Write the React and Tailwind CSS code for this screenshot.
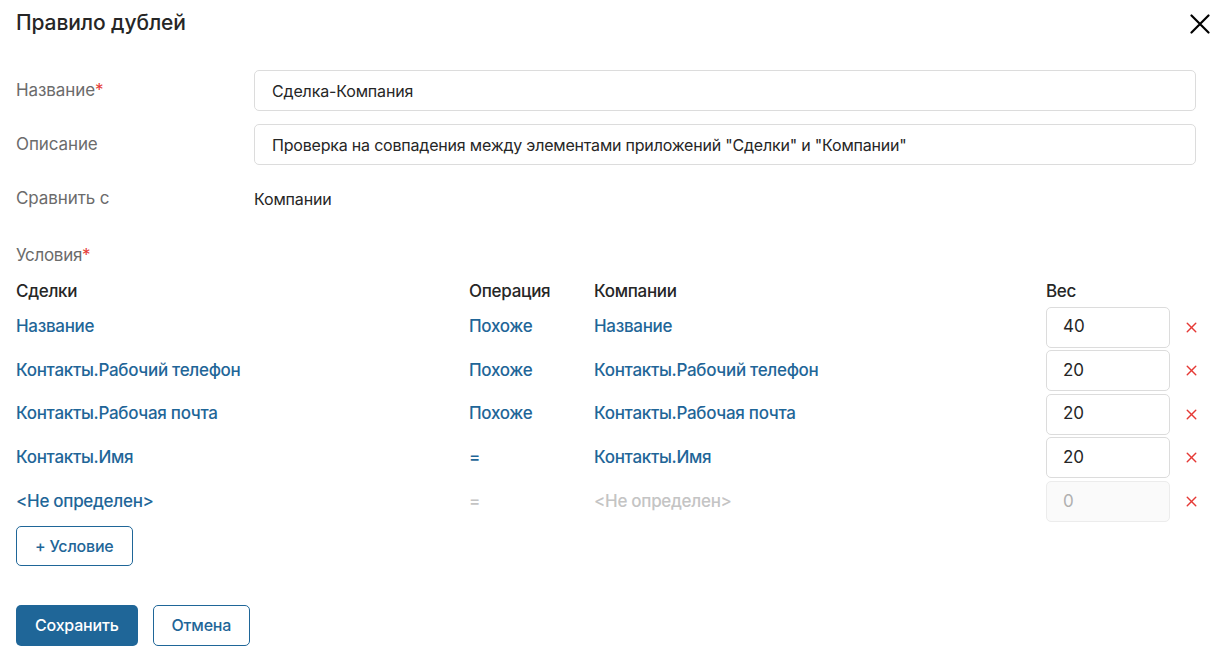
import { X } from 'lucide-react';

const rows = [
  { left: 'Название', op: 'Похоже', right: 'Название', weight: '40' },
  { left: 'Контакты.Рабочий телефон', op: 'Похоже', right: 'Контакты.Рабочий телефон', weight: '20' },
  { left: 'Контакты.Рабочая почта', op: 'Похоже', right: 'Контакты.Рабочая почта', weight: '20' },
  { left: 'Контакты.Имя', op: '=', right: 'Контакты.Имя', weight: '20' },
  { left: '<Не определен>', op: '=', right: '<Не определен>', weight: '0', empty: true },
];

function Field({ label, required, children }) {
  return (
    <div className="flex items-center min-h-[41px] mb-[13px]">
      <div className="w-[238px] shrink-0 pt-[1px] text-[17px] text-[#6b6b6b] tracking-[-0.1px]">
        {label}
        {required && <span className="text-[#e53935]">*</span>}
      </div>
      <div className="flex-1">{children}</div>
    </div>
  );
}

export default function App() {
  return (
    <div className="w-[1220px] h-[651px] bg-white px-4 overflow-hidden text-[#262626]" style={{ fontFamily: 'Inter, "Noto Sans", sans-serif' }}>
      {/* header */}
      <div className="flex items-center justify-between h-[44px] pt-[1px]">
        <h2 className="text-[21px] font-medium text-[#262626] tracking-[-0.1px]">Правило дублей</h2>
        <button className="text-black mr-[-6px] mt-[2px]">
          <svg width="20" height="20" viewBox="0 0 20 20" fill="none" stroke="currentColor" strokeWidth="2.2" strokeLinecap="round">
            <path d="M1.5 1.5 18.5 18.5M18.5 1.5 1.5 18.5" />
          </svg>
        </button>
      </div>

      <div className="mt-[26px] pr-[8px]">
        <Field label="Название" required>
          <div className="h-[41px] rounded-[5px] border border-[#dcdcdc] px-[17px] flex items-center text-[16px] tracking-[-0.15px]">Сделка-Компания</div>
        </Field>
        <Field label="Описание">
          <div className="h-[41px] rounded-[5px] border border-[#dcdcdc] px-[17px] flex items-center text-[16px] tracking-[-0.2px]">
            Проверка на совпадения между элементами приложений "Сделки" и "Компании"
          </div>
        </Field>
        <Field label="Сравнить с">
          <div className="text-[16px] tracking-[-0.15px] pt-[1px]">Компании</div>
        </Field>
      </div>

      <div className="text-[17px] text-[#6b6b6b] mt-[22px] h-[30px] flex items-center tracking-[-0.3px]">
        Условия<span className="text-[#e53935]">*</span>
      </div>

      {/* conditions table */}
      <div className="mt-[11px] text-[17px] font-medium tracking-[-0.3px]">
        <div className="flex items-center h-[20px] mb-[4.5px] text-[#262626]">
          <div className="w-[453px]">Сделки</div>
          <div className="w-[125px]">Операция</div>
          <div className="w-[452px]">Компании</div>
          <div>Вес</div>
        </div>
        {rows.map((r, i) => (
          <div key={i} className="flex items-center h-[41px] mb-[2.6px]">
            <div className="w-[453px] text-[#1f6698]">{r.left}</div>
            <div className={`w-[125px] ${r.empty ? 'text-[#c4c4c4]' : 'text-[#1f6698]'}`}>{r.op}</div>
            <div className={`w-[452px] ${r.empty ? 'text-[#c4c4c4]' : 'text-[#1f6698]'}`}>{r.right}</div>
            <div
              className={`w-[124px] h-[41px] rounded-[5px] border flex items-center px-[16px] font-normal tracking-normal ${
                r.empty ? 'border-[#ececec] bg-[#fafafa] text-[#b0b0b0]' : 'border-[#dcdcdc] text-[#262626]'
              }`}
            >
              {r.weight}
            </div>
            <button className="ml-[13px] text-[#e53935]">
              <X size={17} strokeWidth={2} />
            </button>
          </div>
        ))}
      </div>

      <button className="mt-[1.5px] h-[40px] px-[18px] rounded-[5px] border border-[#1f6698] text-[#1f6698] text-[16px] font-medium tracking-[-0.2px]">
        + Условие
      </button>

      <div className="flex gap-[15px] mt-[39px]">
        <button className="h-[41px] px-[19px] rounded-[5px] bg-[#1f6698] text-white text-[16px] font-medium tracking-[-0.2px]">Сохранить</button>
        <button className="h-[41px] px-[18px] rounded-[5px] border border-[#1f6698] text-[#1f6698] text-[16px] font-medium tracking-[-0.2px]">Отмена</button>
      </div>
    </div>
  );
}
